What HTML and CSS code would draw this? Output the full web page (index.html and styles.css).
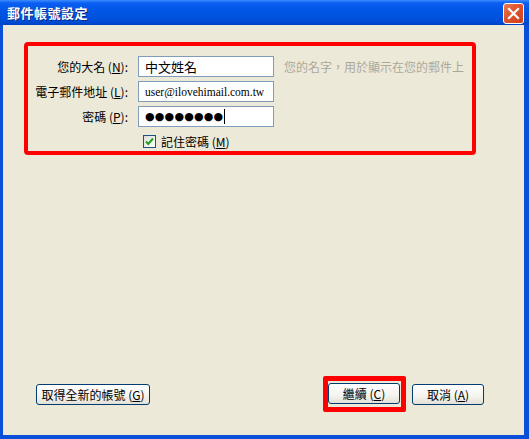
FILE: index.html
```html
<!DOCTYPE html>
<html lang="zh-Hant">
<head>
    <meta charset="UTF-8">
    <title>郵件帳號設定</title>
    <link rel="stylesheet" href="styles.css">
</head>
<body>
    <div class="window">
        <div class="titlebar">
            <span class="title">郵件帳號設定</span>
            <button class="close" aria-label="關閉">
                <svg width="13" height="13" viewBox="0 0 13 13">
                    <path d="M2 2 L11 11 M11 2 L2 11" stroke="#fff" stroke-width="2.2" stroke-linecap="square"/>
                </svg>
            </button>
        </div>

        <div class="client">
            <div class="highlight">
                <div class="form">
                    <label class="label" for="name">您的大名 (<u>N</u>):</label>
                    <input class="field cjk" id="name" type="text" value="中文姓名">
                    <span class="hint">您的名字，用於顯示在您的郵件上</span>

                    <label class="label" for="email">電子郵件地址 (<u>L</u>):</label>
                    <input class="field latin" id="email" type="text" value="user@ilovehimail.com.tw">
                    <span></span>

                    <label class="label" for="pass">密碼 (<u>P</u>):</label>
                    <div class="field pass"><span class="dots">●●●●●●●●</span><span class="caret"></span></div>
                    <span></span>

                    <label class="remember">
                        <span class="check">
                            <svg width="9" height="9" viewBox="0 0 9 9">
                                <path d="M1 4.5 L3.3 7 L8 1.5" fill="none" stroke="#21a121" stroke-width="2"/>
                            </svg>
                        </span>
                        <span>記住密碼 (<u>M</u>)</span>
                    </label>
                </div>
            </div>

            <div class="actions">
                <button class="btn new-account">取得全新的帳號 (<u>G</u>)</button>
                <div class="right">
                    <div class="mark"><button class="btn">繼續 (<u>C</u>)</button></div>
                    <button class="btn">取消 (<u>A</u>)</button>
                </div>
            </div>
        </div>
    </div>
</body>
</html>
```

FILE: styles.css
```css
html, body {
    margin: 0;
    padding: 0;
}
body {
    font-family: "Noto Sans CJK TC", "Liberation Sans", sans-serif;
    font-size: 12px;
    color: #000;
}
.window {
    width: 529px;
    height: 439px;
    box-sizing: border-box;
    background: #0a4fd8;
    display: flex;
    flex-direction: column;
    padding: 0 5px 4px 3px;
}
.titlebar {
    height: 25px;
    margin: 0 -5px 0 -3px;
    padding: 0 5px 0 7px;
    background: linear-gradient(#3d8dff 0, #0b5ef2 3px, #0056e6 40%, #004ed9 85%, #0040c4 100%);
    display: flex;
    align-items: center;
    justify-content: space-between;
}
.title {
    color: #fff;
    font-weight: bold;
    font-size: 13px;
    text-shadow: 1px 1px 0 #0b2a80;
    letter-spacing: 0.5px;
}
.close {
    width: 21px;
    height: 21px;
    margin-top: 1px;
    padding: 0;
    border: 1px solid #fff;
    border-radius: 3px;
    background: linear-gradient(135deg, #ea7a55 0, #e0532c 45%, #c8401b 100%);
    display: flex;
    align-items: center;
    justify-content: center;
}
.client {
    flex: 1;
    background: #ece9d8;
    display: flex;
    flex-direction: column;
    padding: 17px 0 23px 21px;
}
.highlight {
    width: 444px;
    height: 95px;
    border: 4px solid #ff0000;
    border-radius: 4px;
    padding-top: 10px;
}
.form {
    display: grid;
    grid-template-columns: 100px 136px auto;
    grid-auto-rows: 21px;
    column-gap: 10px;
    row-gap: 4px;
    align-items: center;
}
.label {
    text-align: right;
    white-space: nowrap;
}
.field {
    box-sizing: border-box;
    height: 21px;
    width: 136px;
    border: 1px solid #7f9db9;
    background: #fff;
    padding: 0 0 0 6px;
    margin: 0;
    outline: none;
}
.cjk {
    font-family: "Noto Sans CJK TC", sans-serif;
    font-size: 13px;
}
.latin {
    font-family: "Liberation Serif", serif;
    font-size: 11.5px;
}
.pass {
    display: flex;
    align-items: center;
}
.dots {
    font-family: "DejaVu Sans", sans-serif;
    font-size: 11px;
    letter-spacing: 0.2px;
    line-height: 1;
}
.caret {
    width: 1px;
    height: 15px;
    background: #000;
    margin-left: 1px;
}
.hint {
    color: #aca899;
    white-space: nowrap;
}
.remember {
    grid-column: 2 / 4;
    align-self: start;
    display: flex;
    align-items: center;
    gap: 5px;
    margin-top: 2px;
    padding-left: 5px;
    white-space: nowrap;
}
.check {
    width: 11px;
    height: 11px;
    border: 1px solid #1c5180;
    background: linear-gradient(135deg, #dcdcd7, #fff);
    display: flex;
    align-items: center;
    justify-content: center;
}
.actions {
    margin-top: auto;
    display: flex;
    align-items: center;
    justify-content: space-between;
    padding: 0 40px 0 12px;
}
.right {
    display: flex;
    align-items: center;
    gap: 6px;
}
.mark {
    border: 5px solid #ff0000;
    border-radius: 2px;
    padding: 2px 1px 3px 0;
    background: #ece9d8;
}
.btn {
    font-family: "Noto Sans CJK TC", sans-serif;
    font-size: 12px;
    height: 21px;
    min-width: 72px;
    padding: 0 6px;
    border: 1px solid #003c74;
    border-radius: 3px;
    background: linear-gradient(#ffffff 0, #f4f3ee 60%, #e3e1d6 100%);
    color: #000;
    line-height: 19px;
    white-space: nowrap;
}
.new-account {
    width: 114px;
    padding: 0;
}
```
